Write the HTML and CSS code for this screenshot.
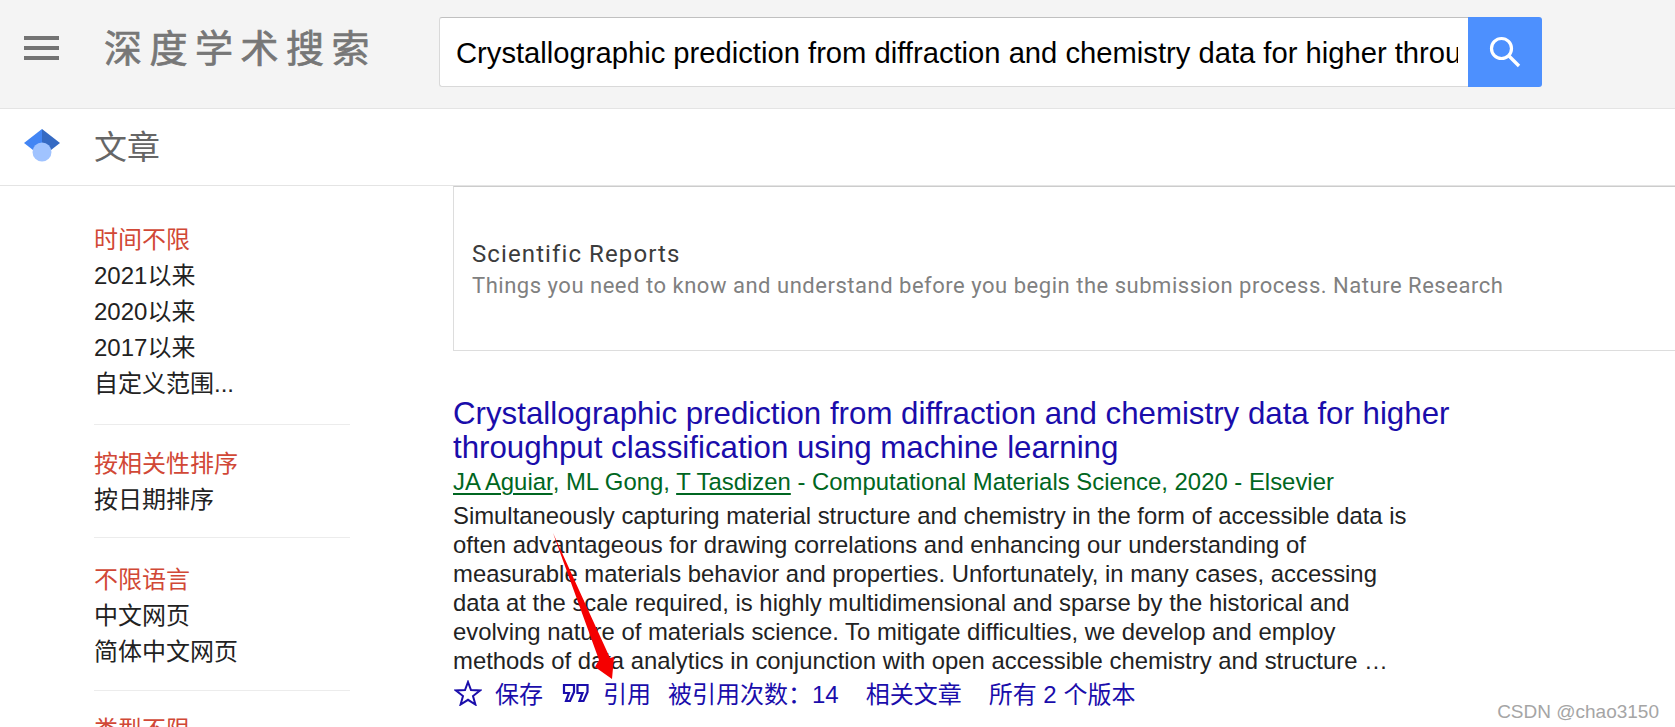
FILE: index.html
```html
<!DOCTYPE html>
<html lang="zh-CN">
<head>
    <meta charset="UTF-8">
    <title>深度学术搜索</title>
    <link rel="stylesheet" href="styles.css">
</head>
<body>
    <header class="top-bar">
        <div class="menu-icon"><span></span><span></span><span></span></div>
        <div class="logo-text">深度学术搜索</div>
        <form class="search-form">
            <input class="search-input" type="text" value="Crystallographic prediction from diffraction and chemistry data for higher throughput classification using machine learning">
            <button class="search-button" type="button">
                <svg width="34" height="34" viewBox="0 0 34 34"><circle cx="13.500" cy="13.500" r="10" fill="none" stroke="#fff" stroke-width="3.200"/><path d="M21 21 L31 31" stroke="#fff" stroke-width="3.400" fill="none"/></svg>
            </button>
        </form>
    </header>
    <div class="sub-bar">
        <svg class="cap-icon" width="36" height="34" viewBox="0 0 36 34">
            <path d="M18 0 L0 14 L18 28 Z" fill="#4285f4"/>
            <path d="M18 0 L36 14 L18 28 Z" fill="#356ac3"/>
            <circle cx="18" cy="23" r="9.500" fill="#a0c3ff"/>
        </svg>
        <span class="sub-title">文章</span>
    </div>
    <div class="content">
        <nav class="sidebar">
            <ul class="filter-group filter-time">
                <li class="selected">时间不限</li>
                <li>2021以来</li>
                <li>2020以来</li>
                <li>2017以来</li>
                <li>自定义范围...</li>
            </ul>
            <ul class="filter-group filter-sort">
                <li class="selected">按相关性排序</li>
                <li>按日期排序</li>
            </ul>
            <ul class="filter-group">
                <li class="selected">不限语言</li>
                <li>中文网页</li>
                <li>简体中文网页</li>
            </ul>
            <ul class="filter-group">
                <li class="selected">类型不限</li>
            </ul>
        </nav>
        <main class="results">
            <div class="ad-box">
                <div class="ad-title">Scientific Reports</div>
                <div class="ad-text">Things you need to know and understand before you begin the submission process. Nature Research</div>
            </div>
            <article class="result">
                <h3 class="result-title">Crystallographic prediction from diffraction and chemistry data for higher<br>throughput classification using machine learning</h3>
                <div class="result-authors"><u>JA Aguiar</u>, ML Gong, <u>T Tasdizen</u> - Computational Materials Science, 2020 - Elsevier</div>
                <div class="result-snippet">Simultaneously capturing material structure and chemistry in the form of accessible data is<br>often advantageous for drawing correlations and enhancing our understanding of<br>measurable materials behavior and properties. Unfortunately, in many cases, accessing<br>data at the scale required, is highly multidimensional and sparse by the historical and<br>evolving nature of materials science. To mitigate difficulties, we develop and employ<br>methods of data analytics in conjunction with open accessible chemistry and structure …</div>
                <div class="result-links">
                    <svg class="link-icon star-icon" width="28" height="26" viewBox="0 0 28 26"><path d="M14 2 L17 10 L26 10.500 L19 16 L21.400 24.500 L14 19.800 L6.600 24.500 L9 16 L2 10.500 L11 10 Z" fill="none" stroke="#1a0dab" stroke-width="2"/></svg>
                    <span class="save-link">保存</span>
                    <svg class="link-icon quote-icon" width="28" height="20" viewBox="0 0 28 20"><path d="M2 2 H12 V9 L8 18 H4 L7 10 H2 Z M15.500 2 H25.500 V9 L21.500 18 H17.500 L20.500 10 H15.500 Z" fill="none" stroke="#1a0dab" stroke-width="2.200"/></svg>
                    <span class="cite-link">引用</span>
                    <span>被引用次数：14</span>
                    <span>相关文章</span>
                    <span>所有 2 个版本</span>
                </div>
            </article>
        </main>
    </div>
    <svg class="arrow" width="1675" height="727" viewBox="0 0 1675 727">
        <path d="M553 533 L599 660 L595 667 L612 679 L614 657 L610 658 Z" fill="#f50000"/>
    </svg>
    <div class="watermark">CSDN @chao3150</div>
</body>
</html>
```

FILE: styles.css
```css
html, body {
    height: 100%;
}

body {
    margin: 0;
    overflow: hidden;
    font-family: "Liberation Sans", "Noto Sans CJK SC", sans-serif;
    color: #222;
    background-color: #fff;
}

.top-bar {
    display: flex;
    align-items: center;
    height: 108px;
    padding-left: 24px;
    background-color: #f4f4f4;
    border-bottom: 1px solid #e4e4e4;
}

.menu-icon {
    display: flex;
    flex-direction: column;
    gap: 6px;
    width: 35px;
    margin-bottom: 12px;
}

.menu-icon span {
    height: 4px;
    background-color: #737373;
}

.logo-text {
    width: 272px;
    margin-left: 45px;
    margin-bottom: 18px;
    font-size: 38px;
    font-weight: 400;
    letter-spacing: 7.500px;
    color: #777;
    -webkit-text-stroke: 0.7px #777;
    white-space: nowrap;
}

.search-form {
    display: flex;
    margin-left: 63px;
    margin-bottom: 4px;
    height: 70px;
}

.search-input {
    width: 1029px;
    height: 70px;
    box-sizing: border-box;
    padding: 2px 10px 0 16px;
    border: 1px solid #d9d9d9;
    border-top-color: #c0c0c0;
    border-right: 0;
    border-radius: 3px 0 0 3px;
    font-family: "Liberation Sans", sans-serif;
    font-size: 29.200px;
    color: #000;
    outline: none;
}

.search-button {
    width: 74px;
    height: 70px;
    padding: 0;
    border: 0;
    border-radius: 0 3px 3px 0;
    background-color: #4d90fe;
    display: flex;
    align-items: center;
    justify-content: center;
}

.sub-bar {
    display: flex;
    align-items: center;
    height: 72px;
    padding: 0 0 4px 24px;
    border-bottom: 1px solid #e4e4e4;
}

.cap-icon {
    width: 36px;
    margin-top: 2px;
}

.sub-title {
    margin-left: 34px;
    font-size: 33px;
    color: #666;
}

.content {
    display: flex;
}

.sidebar {
    width: 256px;
    margin-left: 94px;
    padding-top: 36px;
    flex-shrink: 0;
}

.filter-group {
    list-style: none;
    margin: 0 0 21px;
    padding: 0 0 20px;
    border-bottom: 1px solid #ececec;
    font-size: 24px;
    line-height: 36px;
    color: #222;
}

.filter-time {
    padding-bottom: 22px;
}

.filter-sort {
    margin-bottom: 24px;
    padding-bottom: 19px;
}

.filter-group .selected {
    color: #d14836;
}

.results {
    margin-left: 103px;
    flex-grow: 1;
}

.ad-box {
    height: 165px;
    box-sizing: border-box;
    margin-right: -20px;
    padding: 51px 18px 0;
    border: 1px solid #ddd;
    border-top-color: #ccc;
}

.ad-title {
    font-family: Roboto, sans-serif;
    font-size: 24px;
    font-weight: 400;
    letter-spacing: 1.100px;
    line-height: 32px;
    color: #3c3c3c;
}

.ad-text {
    font-family: Roboto, sans-serif;
    font-size: 22px;
    letter-spacing: 0.520px;
    line-height: 32px;
    color: #808080;
}

.result {
    margin-top: 46px;
}

.result-title {
    margin: 0;
    font-size: 31.250px;
    font-weight: normal;
    line-height: 34px;
    color: #1a0dab;
}

.result-authors {
    margin-top: 1px;
    font-size: 23.900px;
    line-height: 32px;
    color: #006621;
}

.result-authors u {
    text-decoration-thickness: 2px;
    text-underline-offset: 3px;
}

.result-snippet {
    margin-top: 3px;
    font-size: 23.870px;
    line-height: 29px;
    color: #222;
    white-space: nowrap;
}

.result-links {
    display: flex;
    align-items: center;
    margin-top: -1px;
    height: 36px;
    font-size: 24px;
    color: #1a0dab;
}

.result-links span {
    margin-right: 27px;
}

.link-icon {
    flex-shrink: 0;
}

.star-icon {
    margin-left: 1px;
    margin-top: 2px;
}

.quote-icon {
    margin-left: 2px;
    margin-top: 1px;
}

.result-links .save-link {
    margin-left: 13px;
    margin-right: 17px;
}

.result-links .cite-link {
    margin-left: 13px;
    margin-right: 17px;
}

.arrow {
    position: absolute;
    left: 0;
    top: 0;
    pointer-events: none;
}

.watermark {
    position: absolute;
    right: 16px;
    top: 701px;
    font-size: 19px;
    color: #a5a5a5;
}
```
